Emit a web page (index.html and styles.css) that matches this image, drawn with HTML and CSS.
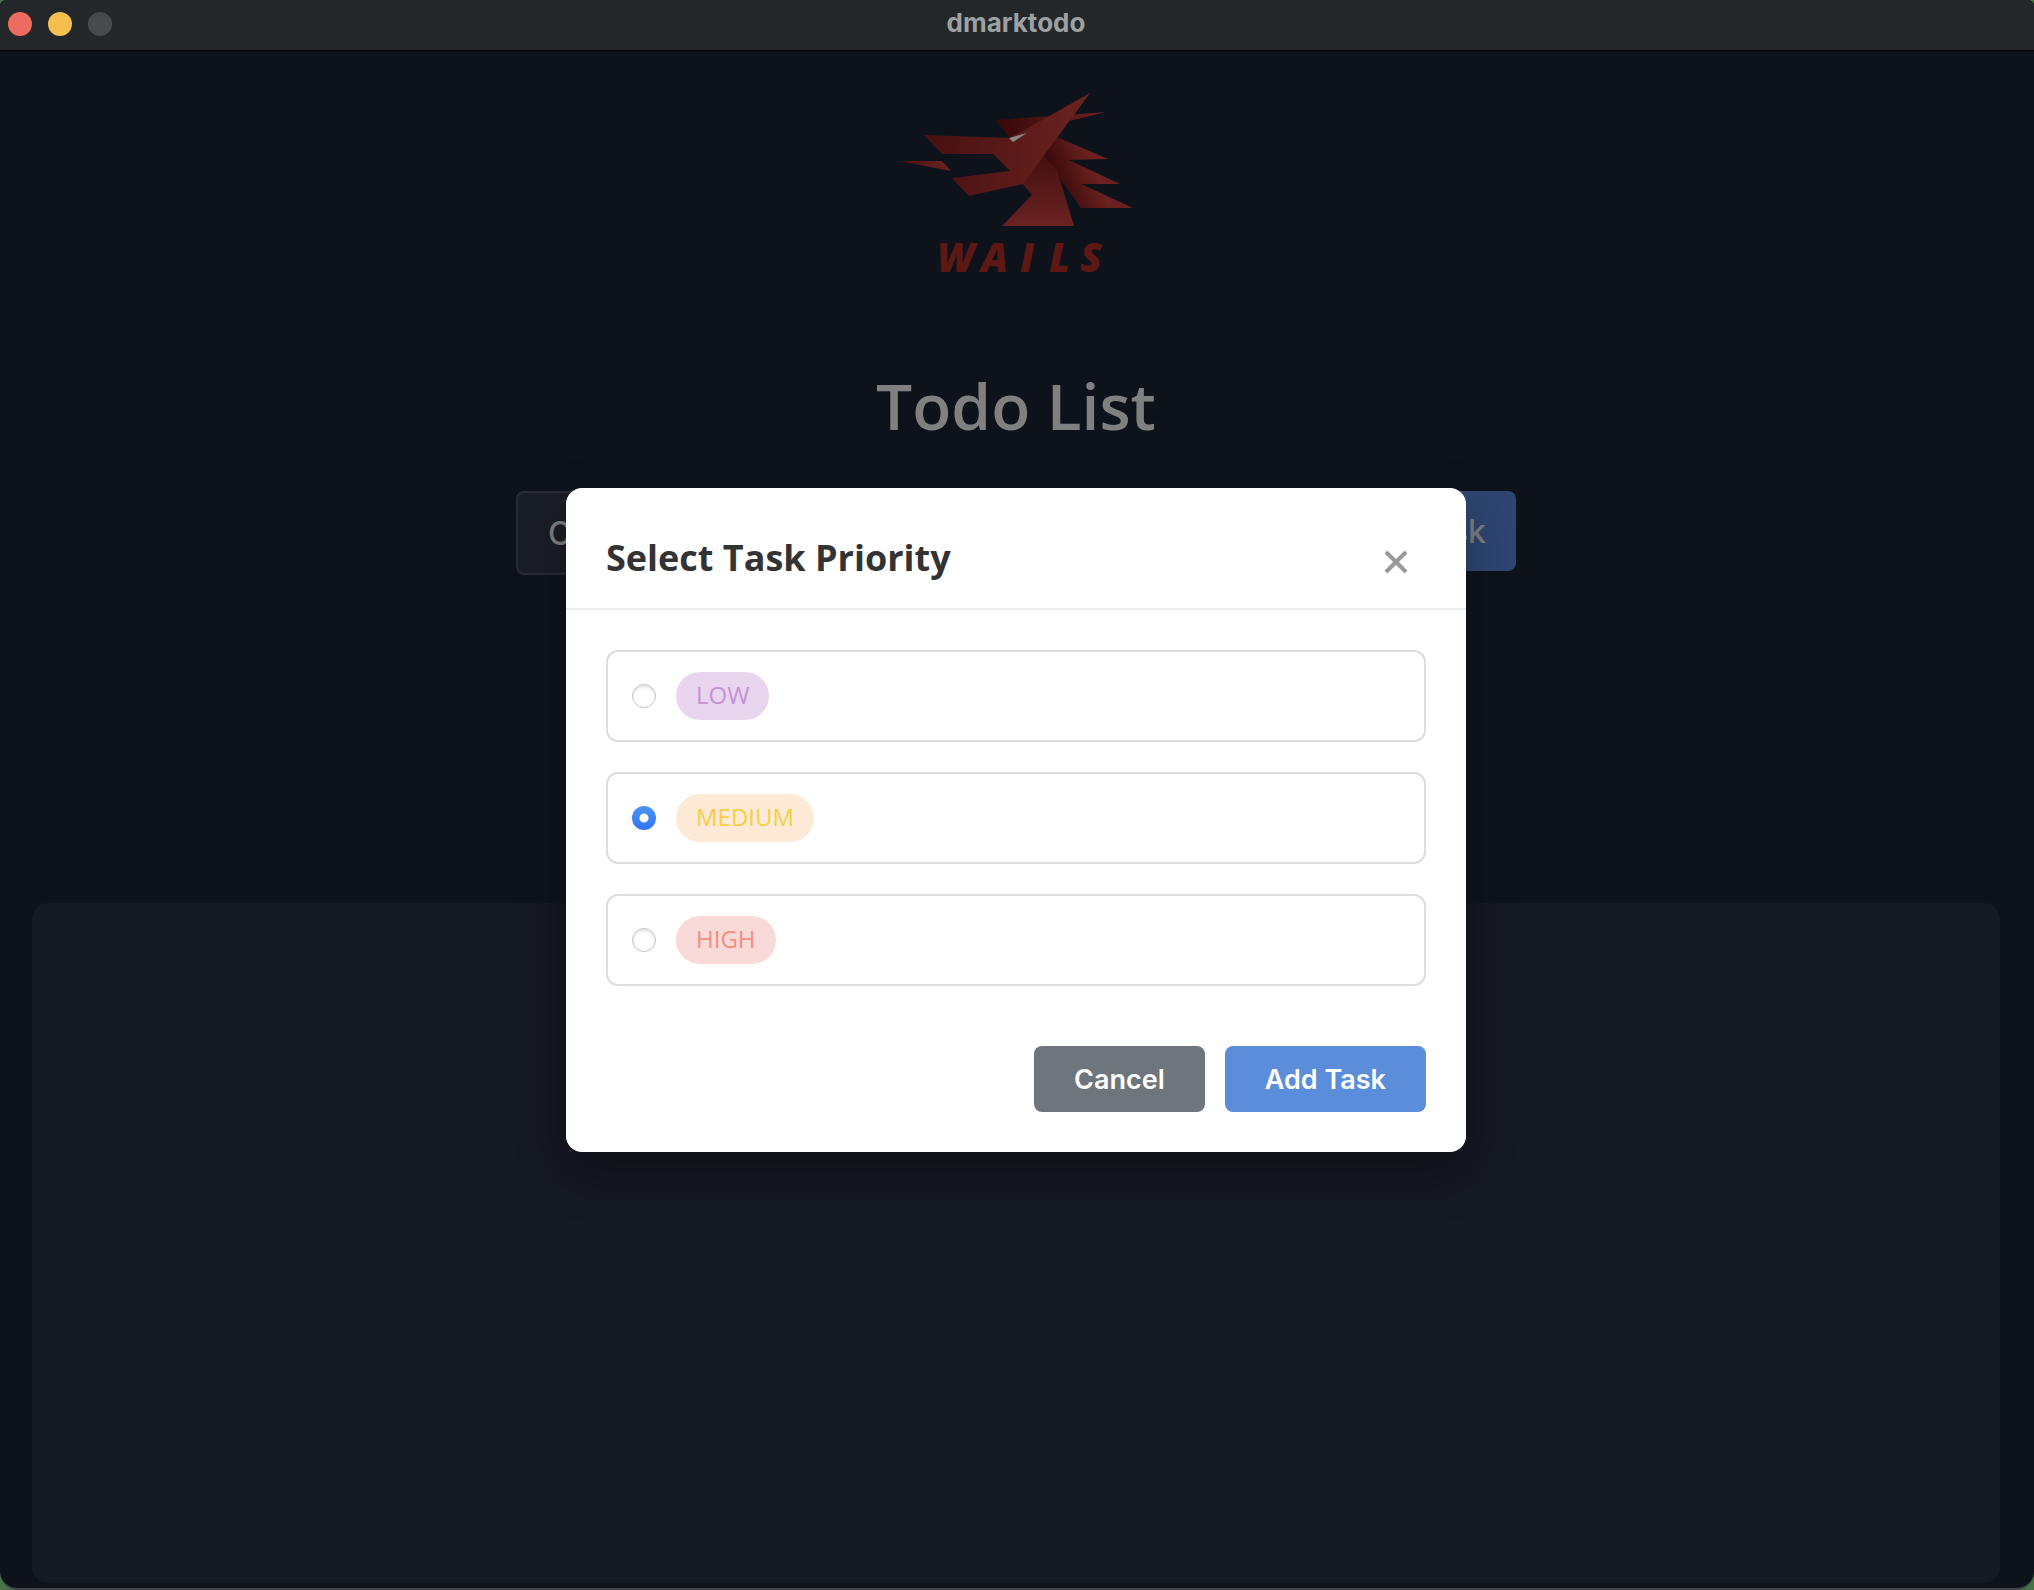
FILE: index.html
```html
<!DOCTYPE html>
<html lang="en">
<head>
<meta charset="utf-8">
<title>dmarktodo</title>
<link rel="stylesheet" href="styles.css">
</head>
<body>
<div class="window">
  <header class="titlebar">
    <div class="lights"><span class="light close"></span><span class="light minimize"></span><span class="light disabled"></span></div>
    <span class="window-title">dmarktodo</span>
  </header>
  <div class="content">
    <main class="app">
      <svg class="logo" viewBox="-4 0 260 210" role="img" aria-label="Wails">
        <defs>
          <linearGradient id="jaw" x1="0" x2="1" y1="0" y2="0"><stop offset="0" stop-color="#471011"/><stop offset="1" stop-color="#6c2320"/></linearGradient>
          <linearGradient id="ear" x1="0" x2="1" y1="0" y2="0"><stop offset="0" stop-color="#380709"/><stop offset="1" stop-color="#6c2320"/></linearGradient>
          <linearGradient id="mane" gradientUnits="userSpaceOnUse" x1="160" y1="85" x2="196" y2="70"><stop offset="0" stop-color="#3d0a0b"/><stop offset="1" stop-color="#6a211f"/></linearGradient>
          <linearGradient id="neck" x1="0" x2="0" y1="0" y2="1"><stop offset="0" stop-color="#451011"/><stop offset="1" stop-color="#6b2220"/></linearGradient>
        </defs>
        <path fill="url(#ear)" d="M106 40L163 36L216 32L179 41L120 58Z"/>
        <path fill="url(#mane)" d="M167 57L218 79L179 80L230 104L191 104L243 128L191 128L154 76Z"/>
        <path fill="url(#neck)" d="M153 75L167 90L184 146L112 146L142 115L132 103Z"/>
        <path fill="url(#jaw)" d="M34 55L120 58L200 13L133 104L79 116L62 98L120 91L103 74L52 74Z"/>
        <path fill="url(#jaw)" d="M9 81L52 81L61 91Z"/>
        <path fill="#8d8787" d="M119 58L137 53L123 62Z"/>
        <text class="logo-text" x="47 91 130 159 190" y="192">WAILS</text>
      </svg>
      <h1>Todo List</h1>
      <form class="task-form">
        <input class="task-input" type="text" value="C" aria-label="Task">
        <button class="task-add" type="button">Add Task</button>
      </form>
      <section class="tasks" aria-label="Tasks"></section>
    </main>
    <div class="overlay">
      <form class="modal" role="dialog" aria-labelledby="dialog-title">
        <header class="modal-head">
          <h2 id="dialog-title">Select Task Priority</h2>
          <button class="dismiss" type="button" aria-label="Close"><svg viewBox="0 0 24 24"><path d="M2 2L22 22M22 2L2 22"/></svg></button>
        </header>
        <div class="options">
          <label class="option"><input type="radio" name="priority"><span class="badge low">LOW</span></label>
          <label class="option"><input type="radio" name="priority" checked><span class="badge medium">MEDIUM</span></label>
          <label class="option"><input type="radio" name="priority"><span class="badge high">HIGH</span></label>
        </div>
        <footer class="actions">
          <button class="action cancel" type="button">Cancel</button>
          <button class="action confirm" type="button">Add Task</button>
        </footer>
      </form>
    </div>
  </div>
</div>
</body>
</html>
```
FILE: styles.css
```css
* { box-sizing: border-box; }
body { margin: 0; background: #477345; font-family: "Open Sans", sans-serif; }
button, input { font: inherit; margin: 0; }
.window { display: flex; flex-direction: column; min-height: 100vh; background: #0e131b; border-bottom: 2px solid #414448; border-radius: 6px 6px 18px 18px; overflow: hidden; }
.titlebar { display: grid; grid-template-columns: 1fr auto 1fr; align-items: center; height: 51px; padding: 0 10px 2px 8px; background: #232729; border-bottom: 1px solid #000; }
.lights { display: flex; gap: 16px; }
.light { width: 24px; height: 24px; border-radius: 50%; }
.close { background: #ed6a5e; }
.minimize { background: #f5bf4f; }
.disabled { background: #464a4c; }
.window-title { padding-bottom: 2px; color: #9da1a4; font: 700 26px/32px Inter, sans-serif; }
.content { position: relative; flex: 1; display: flex; flex-direction: column; }
.app { flex: 1; display: flex; flex-direction: column; align-items: center; padding: 29px 34px 5px 32px; }
.logo { width: 260px; height: 210px; }
.logo-text { font: italic 800 40px "Open Sans", sans-serif; fill: #5e1814; }
h1 { margin: 72px 0 0; color: #808080; font-size: 64px; font-weight: 600; line-height: 88px; }
.task-form { display: flex; align-items: flex-start; justify-content: space-between; width: 1000px; margin-top: 41px; }
.task-input { width: 760px; height: 84px; padding: 0 30px; color: #7d7d7d; background: #1a1e25; border: 2px solid #292d33; border-radius: 8px; font: 500 32px Inter, sans-serif; }
.task-add { height: 80px; padding: 0 30px; color: #7d7d7d; background: #2e4670; border: 0; border-radius: 8px; font: 500 32px Inter, sans-serif; }
.tasks { flex: 1; align-self: stretch; margin-top: 328px; background: #151920; border-radius: 16px; }
.overlay { position: absolute; inset: 0 2px 0 0; display: flex; align-items: center; justify-content: center; }
.modal { width: 900px; background: #fff; border-radius: 16px; box-shadow: 0 20px 50px rgba(0,0,0,.3); }
.modal-head { display: flex; align-items: center; justify-content: space-between; height: 122px; padding: 20px 40px 0; border-bottom: 2px solid #eee; }
h2 { margin: 0; color: #333; font-size: 36px; font-weight: 700; line-height: 50px; }
.dismiss { display: grid; place-items: center; width: 60px; height: 60px; padding: 8px 0 0; border: 0; background: none; }
.dismiss svg { width: 24px; height: 24px; fill: none; stroke: #999; stroke-width: 4; }
.options { display: flex; flex-direction: column; gap: 30px; padding: 40px 40px 60px; }
.option { display: flex; align-items: center; gap: 20px; height: 92px; padding: 0 24px; border: 2px solid #ddd; border-radius: 12px; }
.option input { appearance: none; width: 24px; height: 24px; border: 1px solid #c4c4c4; border-radius: 50%; background: #fff; box-shadow: inset 0 2px 3px rgba(0,0,0,.12); }
.option input:checked { border: 0; background: radial-gradient(circle, #fff 4px, transparent 5px), linear-gradient(#4c94f8, #3274f6); box-shadow: none; }
.badge { padding: 0 20px 2px; border-radius: 24px; font-size: 24px; line-height: 46px; }
.low { color: #c393d5; background: #e9d5ee; }
.medium { color: #f7ce46; background: #fcead6; }
.high { color: #f09084; background: #f9dad8; }
.actions { display: flex; justify-content: flex-end; gap: 20px; padding: 0 40px 40px; }
.action { height: 66px; padding: 2px 40px 0; border: 0; border-radius: 8px; color: #fff; font: 600 27px Inter, sans-serif; }
.cancel { background: #6d757d; }
.confirm { background: #5c8ddb; }
```
